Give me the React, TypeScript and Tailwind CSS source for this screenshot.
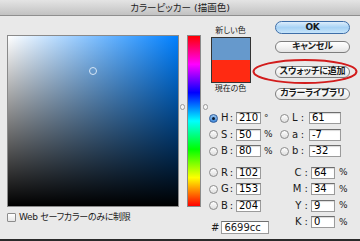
import React from 'react';

const font = "font-['DejaVu_Sans','Noto_Sans_CJK_JP',sans-serif] [font-feature-settings:'palt']";

const Radio = ({ on = false }: { on?: boolean }) =>
  on ? (
    <div className="w-[9px] h-[9px] rounded-full border border-[#2f5d9c] bg-[linear-gradient(#9cc8f2,#3d86d8)] flex items-center justify-center shrink-0">
      <div className="w-[3px] h-[3px] rounded-full bg-[#0d1b2e]" />
    </div>
  ) : (
    <div className="w-[9px] h-[9px] rounded-full border border-[#8c8c8c] bg-[linear-gradient(#ffffff,#dedede)] shrink-0" />
  );

const Box = ({ value, w }: { value: string; w: string }) => (
  <div className={`${w} h-[12px] bg-white border border-[#9b9b9b] border-t-[#6f6f6f] shadow-[inset_0_1px_1px_rgba(0,0,0,0.15)] text-[10px] leading-[10px] pl-[2px] text-black`}>
    {value}
  </div>
);

const Label = ({ t }: { t: string }) => (
  <span className="w-[12px] ml-[3px] flex justify-between text-[10px] leading-none">
    <span>{t}</span>
    <span>:</span>
  </span>
);

const RadioRow = ({ on, t, value, unit, w }: { on?: boolean; t: string; value: string; unit?: string; w: string }) => (
  <div className="h-[16.5px] flex items-center">
    <Radio on={on} />
    <Label t={t} />
    <div className="ml-[3px]">
      <Box value={value} w={w} />
    </div>
    {unit && <span className="ml-[3px] text-[9px] leading-none">{unit}</span>}
  </div>
);

const CmykRow = ({ t, value }: { t: string; value: string }) => (
  <div className="h-[16.5px] flex items-center">
    <span className="w-[29px] text-right text-[10px] leading-none pr-[1px]">{t} :</span>
    <div className="ml-[2px]">
      <Box value={value} w="w-[24px]" />
    </div>
    <span className="ml-[4px] text-[9px] leading-none">%</span>
  </div>
);

const MacButton = ({ label, primary = false, className = '' }: { label: string; primary?: boolean; className?: string }) => (
  <div
    className={`h-[12.5px] w-[75px] rounded-full border flex items-center justify-center whitespace-nowrap text-[9px] font-bold leading-none tracking-[-0.2px] ${
      primary
        ? 'border-[#3e6ea8] bg-[linear-gradient(#dcedfc,#a7d2f5_50%,#c6e4fa)]'
        : 'border-[#7d7d7d] bg-[linear-gradient(#ffffff,#f3f3f3_50%,#e4e4e4)]'
    } ${className}`}
  >
    {label}
  </div>
);

export default function App() {
  return (
    <div className={`relative w-[360px] h-[241px] overflow-hidden bg-[#e9e9e9] border-b-2 border-[#2a2a2a] text-[#1a1a1a] ${font}`}>
      <div className="h-[16px] bg-[linear-gradient(#e4e4e4,#c2c2c2)] border-b border-[#8f8f8f] flex items-center justify-center text-[9.5px] leading-none text-[#222]">
        カラーピッカー (描画色)
      </div>

      <div className="flex pl-[7px]">
        <div className="w-[172px] pt-[19px] flex flex-col">
          <div className="relative h-[172px] border border-[#8a8a8a] bg-[linear-gradient(to_right,#ffffff,#0080ff)]">
            <div className="absolute inset-0 bg-[linear-gradient(to_bottom,rgba(0,0,0,0),#000000)]" />
            <div className="absolute left-[81px] top-[31px] w-[8px] h-[8px] rounded-full border border-[#d6e6f6]" />
          </div>
          <div className="flex items-center mt-[6px]">
            <div className="w-[9px] h-[9px] border border-[#8c8c8c] bg-[linear-gradient(#ffffff,#e6e6e6)] rounded-[1px]" />
            <span className="ml-[3px] text-[9px] leading-none tracking-[-0.3px] whitespace-nowrap">Web セーフカラーのみに制限</span>
          </div>
        </div>

        <div className="ml-[8px] pt-[19px]">
          <div className="relative w-[14px] h-[172px] border border-[#8a8a8a] bg-[linear-gradient(to_bottom,#ff0000,#ff00ff_16.67%,#0000ff_33.33%,#00ffff_50%,#00ff00_66.67%,#ffff00_83.33%,#ff0000)]">
            <div className="absolute -left-[8px] top-[68px] w-[5px] h-[6px] rounded-full border border-[#9a9a9a] bg-[#f4f4f4]" />
            <div className="absolute left-[15px] top-[68px] w-[5px] h-[6px] rounded-full border border-[#9a9a9a] bg-[#f4f4f4]" />
          </div>
        </div>

        <div className="ml-[8px] flex flex-col w-[151px]">
          <div className="h-[94px] flex">
            <div className="w-[42px] pt-[9px] flex flex-col items-center pl-[1px]">
              <div className="h-[12px] text-[8px] leading-[12px] whitespace-nowrap">新しい色</div>
              <div className="w-[40px] border border-[#333]">
                <div className="h-[22px] bg-[#6699cc]" />
                <div className="h-[22px] bg-[#ff2a12]" />
              </div>
              <div className="h-[12px] text-[8px] leading-[12px] whitespace-nowrap">現在の色</div>
            </div>
            <div className="ml-[24px] pt-[5px] flex flex-col">
              <MacButton label="OK" primary />
              <MacButton label="キャンセル" className="mt-[7px]" />
              <MacButton label="スウォッチに追加" className="mt-[12.5px]" />
              <MacButton label="カラーライブラリ" className="mt-[9.5px]" />
            </div>
          </div>

          <div className="flex">
            <div className="w-[71px] flex flex-col">
              <RadioRow on t="H" value="210" unit="°" w="w-[25px]" />
              <RadioRow t="S" value="50" unit="%" w="w-[25px]" />
              <RadioRow t="B" value="80" unit="%" w="w-[25px]" />
              <div className="mt-[5px]" />
              <RadioRow t="R" value="102" w="w-[25px]" />
              <RadioRow t="G" value="153" w="w-[25px]" />
              <RadioRow t="B" value="204" w="w-[25px]" />
              <div className="mt-[5.5px] h-[16.5px] flex items-center pl-[2px]">
                <span className="text-[10px] leading-none">#</span>
                <div className="ml-[2px] w-[48px] h-[13px] bg-white border border-[#9b9b9b] border-t-[#6f6f6f] text-[10px] leading-[11px] pl-[2px]">
                  6699cc
                </div>
              </div>
            </div>
            <div className="flex flex-col">
              <div className="h-[16.5px] flex items-center">
                <Radio />
                <Label t="L" />
                <div className="ml-[5px]"><Box value="61" w="w-[32px]" /></div>
              </div>
              <div className="h-[16.5px] flex items-center">
                <Radio />
                <Label t="a" />
                <div className="ml-[5px]"><Box value="-7" w="w-[32px]" /></div>
              </div>
              <div className="h-[16.5px] flex items-center">
                <Radio />
                <Label t="b" />
                <div className="ml-[5px]"><Box value="-32" w="w-[32px]" /></div>
              </div>
              <div className="mt-[5px]" />
              <CmykRow t="C" value="64" />
              <CmykRow t="M" value="34" />
              <CmykRow t="Y" value="9" />
              <CmykRow t="K" value="0" />
            </div>
          </div>
        </div>
      </div>

      <svg className="absolute left-[252px] top-[58px] w-[106px] h-[27px]" viewBox="0 0 106 27">
        <ellipse cx="53" cy="13.5" rx="51.5" ry="11.5" fill="none" stroke="#d21c1c" strokeWidth="2" />
      </svg>
    </div>
  );
}
